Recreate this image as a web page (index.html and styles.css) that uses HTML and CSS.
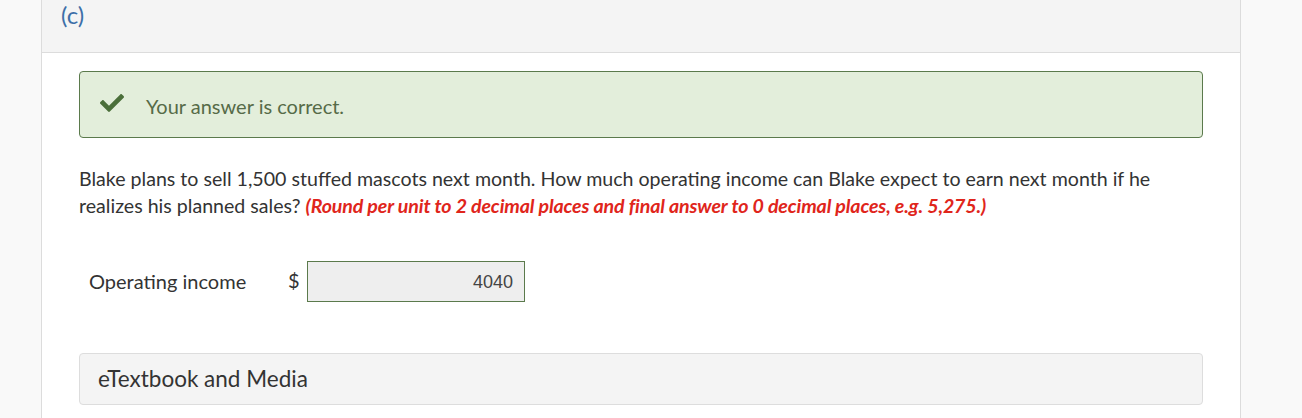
FILE: index.html
```html
<!DOCTYPE html>
<html>
<head>
<meta charset="utf-8">
<link rel="stylesheet" href="styles.css">
</head>
<body>
<div class="panel">
  <div class="panel-head"><span class="part">(c)</span></div>
  <div class="panel-body">
    <div class="feedback">
      <svg class="check" viewBox="0 64 512 384" width="24" height="18" aria-hidden="true"><path d="M173.898 439.404l-166.4-166.4c-9.997-9.997-9.997-26.206 0-36.204l36.203-36.204c9.997-9.998 26.207-9.998 36.204 0L192 312.69 432.095 72.596c9.997-9.997 26.207-9.997 36.204 0l36.203 36.204c9.997 9.997 9.997 26.206 0 36.204l-294.4 294.401c-9.998 9.997-26.207 9.997-36.204-.001z"/></svg>
      <span class="feedback-text">Your answer is correct.</span>
    </div>
    <p class="question">Blake plans to sell 1,500 stuffed mascots next month. How much operating income can Blake expect to earn next month if he realizes his planned sales? <em class="hint">(Round per unit to 2 decimal places and final answer to 0 decimal places, e.g. 5,275.)</em></p>
    <div class="answer-row">
      <span class="label">Operating income</span>
      <span class="currency">$</span>
      <div class="input">4040</div>
    </div>
    <div class="media">eTextbook and Media</div>
  </div>
</div>
</body>
</html>
```
FILE: styles.css
```css
html, body {
  margin: 0;
  padding: 0;
}
body {
  background: #f9f9f9;
  font-family: Lato, "Open Sans", sans-serif;
  color: #333;
}
.panel {
  margin-left: 41px;
  width: 1198px;
  border-left: 1px solid #dcdcdc;
  border-right: 1px solid #dcdcdc;
  background: #fff;
  min-height: 418px;
}
.panel-head {
  height: 53px;
  background: #f4f4f4;
  border-bottom: 1px solid #dcdcdc;
  padding-left: 19px;
  box-sizing: border-box;
  overflow: hidden;
}
.part {
  display: block;
  font-size: 24px;
  line-height: 28px;
  color: #3d6fa8;
  margin-top: 1px;
}
.panel-body {
  padding: 18px 37px 0 37px;
}
.feedback {
  display: flex;
  align-items: center;
  height: 65px;
  border: 1px solid #5b7a4c;
  border-radius: 4px;
  background: #e3eedb;
  padding-left: 20px;
}
.check {
  fill: #4b6f3a;
  margin-right: 22px;
  position: relative;
  top: -2px;
}
.feedback-text {
  font-size: 20px;
  color: #566b48;
  position: relative;
  top: 1px;
}
.question {
  margin: 27px 0 0 0;
  font-size: 19.6px;
  line-height: 27px;
  color: #333;
}
.hint {
  color: #e0251b;
  font-weight: bold;
  font-style: italic;
  letter-spacing: -0.13px;
}
.answer-row {
  display: flex;
  align-items: center;
  margin-top: 42px;
  padding-left: 10px;
}
.label {
  font-size: 20px;
  color: #333;
  width: 199px;
  position: relative;
  top: -1px;
}
.currency {
  font-size: 20px;
  width: 19px;
  position: relative;
  top: -2px;
}
.input {
  height: 39px;
  width: 205px;
  border: 1px solid #5b7a4c;
  background: #eee;
  font-family: "Liberation Sans", Arial, sans-serif;
  font-size: 18px;
  color: #444;
  text-align: right;
  line-height: 41px;
  padding-right: 11px;
}
.media {
  margin-top: 51px;
  height: 50px;
  border: 1px solid #ddd;
  border-radius: 4px;
  background: #f4f4f4;
  padding-left: 18px;
  font-size: 22.5px;
  line-height: 50px;
  color: #333;
}
```
